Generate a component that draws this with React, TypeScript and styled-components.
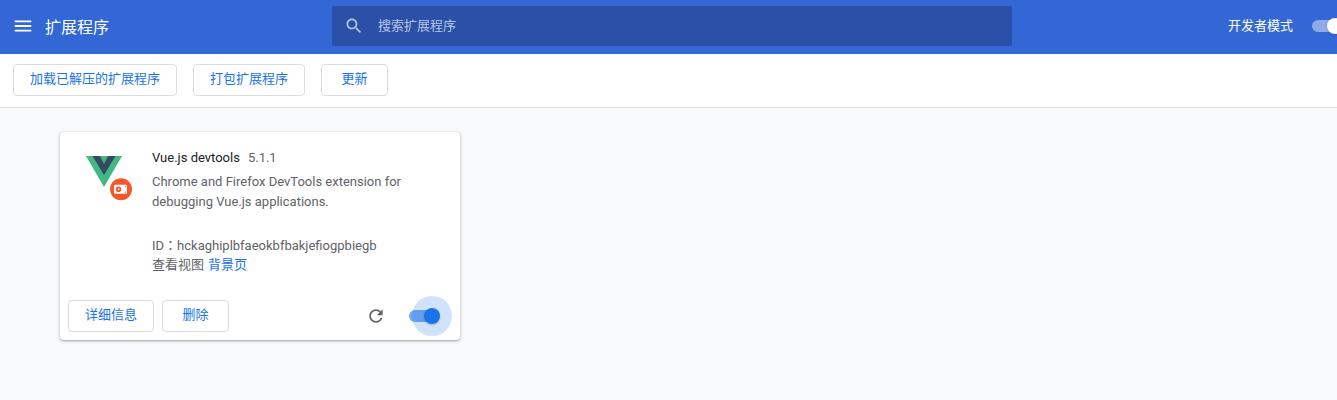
import React from 'react'
import styled, { createGlobalStyle } from 'styled-components'

const Global = createGlobalStyle`
  html, body {
    margin: 0;
    height: 100%;
    overflow: hidden;
    background: #f8f9fa;
    font-family: Roboto, "Noto Sans CJK SC", sans-serif;
    font-size: 13px;
  }
`

const Header = styled.header`
  display: grid;
  grid-template-columns: 332px 680px 1fr;
  align-items: center;
  height: 54px;
  background: #3367d6;
  color: #fff;
  overflow: hidden;
`

const HeaderLeft = styled.div`
  display: flex;
  align-items: center;
  gap: 11px;
  padding-left: 12px;
`

const MenuButton = styled.div`
  display: flex;
  width: 22px;
  height: 22px;
  margin-top: -2px;
`

const Title = styled.h1`
  margin: 0;
  font-size: 16px;
  font-weight: 400;
  line-height: 20px;
  position: relative;
  top: 1px;
`

const SearchBox = styled.div`
  display: flex;
  align-items: center;
  height: 40px;
  margin-top: -2px;
  padding-left: 12px;
  gap: 14px;
  border-radius: 2px;
  background: #2a50a7;
  color: #b8c6e6;
`

const SearchText = styled.span`
  margin-bottom: 4px;
`

const HeaderRight = styled.div`
  display: flex;
  align-items: center;
  gap: 19px;
  height: 20px;
  padding-left: 216px;
  margin-top: -3px;
  white-space: nowrap;
`

const ModeLabel = styled.span`
  margin-bottom: 2px;
`

const Toolbar = styled.div`
  display: flex;
  align-items: flex-start;
  gap: 16px;
  height: 43px;
  padding: 10px 0 0 13px;
  background: #fff;
  border-bottom: 1px solid #e0e0e0;
`

const Button = styled.button`
  min-width: 67px;
  height: 32px;
  padding: 0 16px 2px;
  border: 1px solid #dadce0;
  border-radius: 4px;
  background: #fff;
  color: #1a73e8;
  font-family: inherit;
  font-size: 13px;
  line-height: 28px;
  white-space: nowrap;
`

const Main = styled.main`
  padding: 24px 0 0 60px;
`

const Card = styled.section`
  display: flex;
  flex-direction: column;
  width: 400px;
  height: 208px;
  border-radius: 4px;
  background: #fff;
  box-shadow: 0 1px 2px rgba(60, 64, 67, 0.3), 0 1px 3px 1px rgba(60, 64, 67, 0.15);
`

const CardBody = styled.div`
  display: flex;
  flex: 1;
  padding: 16px 0 0 24px;
`

const Logo = styled.svg`
  flex: none;
  width: 48px;
  height: 48px;
  margin: 6px 20px 0 0;
`

const Details = styled.div`
  display: flex;
  flex-direction: column;
  color: #5f6368;
  line-height: 20px;
`

const NameRow = styled.div`
  display: flex;
  gap: 8px;
`

const Name = styled.span`
  color: #202124;
`

const Description = styled.p`
  width: 280px;
  margin: 4px 0 24px;
`

const IdRow = styled.div`
  height: 20px;
`

const Colon = styled.span`
  font-family: "Noto Sans CJK TC", sans-serif;
  line-height: 0;
`

const LinkRow = styled.div`
  display: flex;
  gap: 4px;
  margin-top: -1px;
`

const Link = styled.a`
  color: #1a73e8;
`

const CardFooter = styled.div`
  display: flex;
  align-items: center;
  gap: 8px;
  height: 32px;
  padding: 0 23px 8px 8px;
`

const Reload = styled.svg`
  width: 20px;
  height: 20px;
  margin: 0 15px 0 auto;
  fill: #5f6368;
`

const Switch = styled.div<{ $light?: boolean }>`
  position: relative;
  flex: none;
  width: 28px;
  height: 12px;
  border-radius: 6px;
  background: ${p => (p.$light ? 'rgba(255, 255, 255, 0.45)' : '#76a9f2')};
`

const Knob = styled.div<{ $light?: boolean }>`
  position: absolute;
  top: -2px;
  left: 15px;
  width: 16px;
  height: 16px;
  border-radius: 50%;
  background: ${p => (p.$light ? '#fff' : '#1a73e8')};
  box-shadow: 0 1px 2px rgba(60, 64, 67, 0.3);
`

const Ripple = styled.div`
  position: absolute;
  top: -14px;
  left: 3px;
  width: 40px;
  height: 40px;
  border-radius: 50%;
  background: rgba(26, 115, 232, 0.2);
`

const Icon = ({ d, size = 24 }: { d: string; size?: number }) => (
  <svg width={size} height={size} viewBox="0 0 24 24" fill="currentColor">
    <path d={d} />
  </svg>
)

const MENU = 'M3 18h18v-2H3v2zm0-5h18v-2H3v2zm0-7v2h18V6H3z'
const SEARCH =
  'M15.5 14h-.79l-.28-.27C15.41 12.59 16 11.11 16 9.5 16 5.91 13.09 3 9.5 3S3 5.91 3 9.5 5.91 16 9.5 16c1.61 0 3.09-.59 4.23-1.57l.27.28v.79l5 4.99L20.49 19l-4.99-5zm-6 0C7.01 14 5 11.99 5 9.5S7.01 5 9.5 5 14 7.01 14 9.5 11.99 14 9.5 14z'
const REFRESH =
  'M17.65 6.35C16.2 4.9 14.21 4 12 4c-4.42 0-7.99 3.58-7.99 8s3.57 8 7.99 8c3.73 0 6.84-2.55 7.73-6h-2.08c-.82 2.33-3.04 4-5.65 4-3.31 0-6-2.69-6-6s2.69-6 6-6c1.66 0 3.14.69 4.22 1.78L13 11h7V4l-2.35 2.35z'

export default function App() {
  return (
    <>
      <Global />
      <Header>
        <HeaderLeft>
          <MenuButton>
            <Icon d={MENU} size={22} />
          </MenuButton>
          <Title>扩展程序</Title>
        </HeaderLeft>
        <SearchBox>
          <Icon d={SEARCH} size={20} />
          <SearchText>搜索扩展程序</SearchText>
        </SearchBox>
        <HeaderRight>
          <ModeLabel>开发者模式</ModeLabel>
          <Switch $light>
            <Knob $light />
          </Switch>
        </HeaderRight>
      </Header>
      <Toolbar>
        <Button>加载已解压的扩展程序</Button>
        <Button>打包扩展程序</Button>
        <Button>更新</Button>
      </Toolbar>
      <Main>
        <Card>
          <CardBody>
            <Logo viewBox="0 0 48 48">
              <path d="M2 2h36L20 33z" fill="#41b883" />
              <path d="M8.5 2h7.5l4 8 4-8h7.5L20 21z" fill="#35495e" />
              <circle cx="37" cy="35.3" r="11" fill="#f4572a" />
              <rect x="30" y="30.8" width="13" height="9" rx="1.2" fill="#fff" />
              <circle cx="34.5" cy="35.3" r="2.8" fill="#f4572a" />
              <circle cx="34.5" cy="35.3" r="1" fill="#fff" />
              <circle cx="41.3" cy="32.4" r="0.6" fill="#f4572a" />
              <circle cx="41.3" cy="38.2" r="0.6" fill="#f4572a" />
            </Logo>
            <Details>
              <NameRow>
                <Name>Vue.js devtools</Name>
                <span>5.1.1</span>
              </NameRow>
              <Description>
                Chrome and Firefox DevTools extension for debugging Vue.js applications.
              </Description>
              <IdRow>
                ID<Colon>：</Colon>hckaghiplbfaeokbfbakjefiogpbiegb
              </IdRow>
              <LinkRow>
                <span>查看视图</span>
                <Link>背景页</Link>
              </LinkRow>
            </Details>
          </CardBody>
          <CardFooter>
            <Button>详细信息</Button>
            <Button>删除</Button>
            <Reload viewBox="0 0 24 24">
              <path d={REFRESH} />
            </Reload>
            <Switch>
              <Ripple />
              <Knob />
            </Switch>
          </CardFooter>
        </Card>
      </Main>
    </>
  )
}
